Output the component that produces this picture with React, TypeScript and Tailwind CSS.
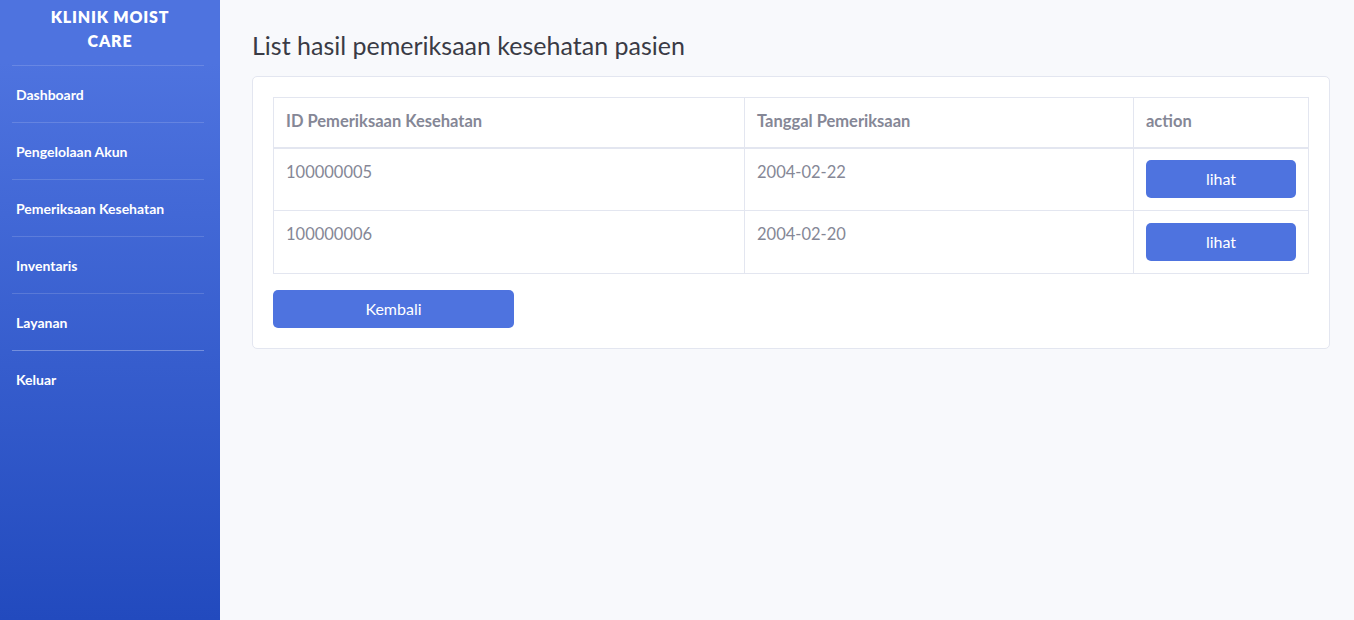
const menu = ['Dashboard', 'Pengelolaan Akun', 'Pemeriksaan Kesehatan', 'Inventaris', 'Layanan', 'Keluar'];

const rows = [
  { id: '100000005', tanggal: '2004-02-22' },
  { id: '100000006', tanggal: '2004-02-20' },
];

export default function App() {
  return (
    <div className="flex min-h-[620px] bg-[#f8f9fc] font-['Lato',sans-serif]">
      <aside className="w-[220px] shrink-0 bg-gradient-to-b from-[#4e73df] from-10% to-[#224abe] text-white">
        <div className="flex h-[65px] items-start justify-center pt-[5px] text-center">
          <span className="w-[140px] text-[16px] leading-[24px] font-extrabold tracking-[0.05em] uppercase">
            Klinik Moist Care
          </span>
        </div>
        <nav>
          {menu.map((item, i) => (
            <div key={item}>
              <div className={`ml-3 mr-4 h-px ${i === 5 ? 'bg-white/30' : 'bg-white/15'}`} />
              <a className="flex h-[56px] items-center px-4 pt-px text-[14px] font-bold text-white">{item}</a>
            </div>
          ))}
        </nav>
      </aside>

      <main className="flex-1 pt-[30px] pr-[24px] pl-[32px]">
        <h1 className="mb-[16px] text-[25px] leading-[30px] text-[#3a3b45]">List hasil pemeriksaan kesehatan pasien</h1>
        <div className="rounded-[5px] border border-[#e3e6f0] bg-white p-5">
          <table className="w-full border-collapse text-[16.5px] text-[#858796]">
            <thead>
              <tr className="h-[50px] border-b-2 border-[#e3e6f0]">
                <th className="w-[471px] border border-[#e3e6f0] px-3 pb-px text-left font-bold">ID Pemeriksaan Kesehatan</th>
                <th className="w-[389px] border border-[#e3e6f0] px-3 pb-px text-left font-bold">Tanggal Pemeriksaan</th>
                <th className="border border-[#e3e6f0] px-3 pb-px text-left font-bold">action</th>
              </tr>
            </thead>
            <tbody>
              {rows.map((r) => (
                <tr key={r.id} className="h-[63px]">
                  <td className="border border-[#e3e6f0] px-3 pt-[11px] align-top leading-[24px]">{r.id}</td>
                  <td className="border border-[#e3e6f0] px-3 pt-[11px] align-top leading-[24px]">{r.tanggal}</td>
                  <td className="border border-[#e3e6f0] px-3 align-middle">
                    <button className="h-[38px] w-full rounded-[5px] bg-[#4e73df] text-[16px] text-white">lihat</button>
                  </td>
                </tr>
              ))}
            </tbody>
          </table>
          <button className="mt-4 h-[38px] w-[241px] rounded-[5px] bg-[#4e73df] text-[16px] text-white">Kembali</button>
        </div>
      </main>
    </div>
  );
}
